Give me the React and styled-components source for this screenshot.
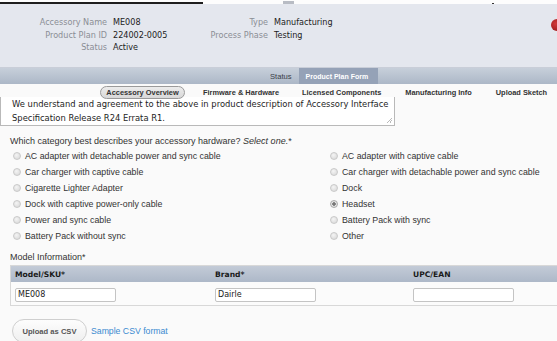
import React from 'react';
import styled, { createGlobalStyle, css } from 'styled-components';

const GlobalStyle = createGlobalStyle`
  body {
    margin: 0;
    background: #fafafa;
    overflow: hidden;
  }
`;

const info = {
  left: [
    ['Accessory Name', 'ME008'],
    ['Product Plan ID', '224002-0005'],
    ['Status', 'Active'],
  ],
  right: [
    ['Type', 'Manufacturing'],
    ['Process Phase', 'Testing'],
  ],
};

// space before each sub tab
const subTabs = [
  { label: 'Accessory Overview', gap: 0 },
  { label: 'Firmware & Hardware', gap: 18 },
  { label: 'Licensed Components', gap: 23 },
  { label: 'Manufacturing Info', gap: 24 },
  { label: 'Upload Sketch', gap: 24 },
];

const leftOptions = [
  'AC adapter with detachable power and sync cable',
  'Car charger with captive cable',
  'Cigarette Lighter Adapter',
  'Dock with captive power-only cable',
  'Power and sync cable',
  'Battery Pack without sync',
];

const rightOptions = [
  'AC adapter with captive cable',
  'Car charger with detachable power and sync cable',
  'Dock',
  'Headset',
  'Battery Pack with sync',
  'Other',
];

const columns = [
  { title: 'Model/SKU*', value: 'ME008' },
  { title: 'Brand*', value: 'Dairle' },
  { title: 'UPC/EAN', value: '' },
];

const App = () => {
  return (
    <Page>
      <GlobalStyle />
      <TopStrip>
        <DarkBar />
        <GreyNub />
        <Dots>
          <span />
          <span />
          <span />
          <span />
          <span />
        </Dots>
        <WinButtons>
          <span />
          <i />
          <span />
        </WinButtons>
      </TopStrip>
      <Header>
        <InfoColumn $width={168} $labelWidth={107}>
          {info.left.map(([k, v]) => (
            <InfoRow key={k}>
              <InfoLabel>{k}</InfoLabel>
              <InfoValue>{v}</InfoValue>
            </InfoRow>
          ))}
        </InfoColumn>
        <InfoColumn $width={200} $labelWidth={100}>
          {info.right.map(([k, v]) => (
            <InfoRow key={k}>
              <InfoLabel>{k}</InfoLabel>
              <InfoValue>{v}</InfoValue>
            </InfoRow>
          ))}
        </InfoColumn>
        <RedDot />
      </Header>
      <TabBar>
        <Tab>Status</Tab>
        <Tab $active>Product Plan Form</Tab>
      </TabBar>
      <SubTabRow>
        {subTabs.map((t, i) => (
          <SubTab key={t.label} $active={i === 0} $gap={t.gap}>
            {t.label}
          </SubTab>
        ))}
      </SubTabRow>
      <Agreement>
        We understand and agreement to the above in product description of Accessory Interface
        Specification Release R24 Errata R1.
        <Grip />
      </Agreement>
      <Question>
        Which category best describes your accessory hardware? <em>Select one.</em>*
      </Question>
      <OptionGrid>
        <OptionColumn>
          {leftOptions.map((o) => (
            <Option key={o}>
              <Radio />
              {o}
            </Option>
          ))}
        </OptionColumn>
        <OptionColumn>
          {rightOptions.map((o) => (
            <Option key={o}>
              <Radio $checked={o === 'Headset'} />
              {o}
            </Option>
          ))}
        </OptionColumn>
      </OptionGrid>
      <SectionLabel>Model Information*</SectionLabel>
      <ModelTable>
        <HeadRow>
          {columns.map((c) => (
            <HeadCell key={c.title}>{c.title}</HeadCell>
          ))}
        </HeadRow>
        <BodyRow>
          {columns.map((c) => (
            <BodyCell key={c.title}>
              <Field>{c.value}</Field>
            </BodyCell>
          ))}
        </BodyRow>
      </ModelTable>
      <Footer>
        <PillButton>Upload as CSV</PillButton>
        <TextLink>Sample CSV format</TextLink>
      </Footer>
    </Page>
  );
};

const tahoma = css`
  font-family: 'DejaVu Sans', 'Liberation Sans', sans-serif;
`;

const arial = css`
  font-family: 'Liberation Sans', Arial, sans-serif;
`;

const Page = styled.div`
  width: 557px;
  height: 341px;
  overflow: hidden;
  background: #fafafa;
`;

const TopStrip = styled.div`
  height: 4px;
  display: flex;
  align-items: flex-start;
  background: #fdfdfd;
`;

const DarkBar = styled.div`
  width: 203px;
  height: 2px;
  margin-top: 2px;
  background: #1e1e1e;
`;

const GreyNub = styled.div`
  width: 11px;
  height: 3px;
  margin: 1px 0 0 80px;
  background: #b8bcc4;
`;

const Dots = styled.div`
  display: flex;
  gap: 28px;
  margin: 4px 0 0 44px;
  span {
    width: 1px;
    height: 1px;
    background: #aaa;
  }
`;

const WinButtons = styled.div`
  display: flex;
  gap: 3px;
  margin: 4px 0 0 24px;
  span {
    width: 10px;
    height: 1px;
    background: #555;
  }
  i {
    width: 2px;
    height: 2px;
    margin-top: -1px;
    background: #333;
  }
`;

const Header = styled.div`
  position: relative;
  height: 63px;
  box-sizing: border-box;
  background: #e4e7ee;
  display: flex;
  padding-top: 12px;
`;

const InfoColumn = styled.div`
  width: ${(p) => p.$width}px;
  display: flex;
  flex-direction: column;
  span:first-child {
    width: ${(p) => p.$labelWidth}px;
  }
`;

const InfoRow = styled.div`
  display: flex;
  gap: 6px;
  height: 12.5px;
  align-items: center;
  ${tahoma};
  font-size: 8.1px;
`;

const InfoLabel = styled.span`
  flex-shrink: 0;
  text-align: right;
  color: #8b8e95;
`;

const InfoValue = styled.span`
  color: #1c1c1c;
`;

const RedDot = styled.div`
  position: absolute;
  right: -6px;
  top: 15px;
  width: 12px;
  height: 12px;
  border-radius: 50%;
  background: radial-gradient(circle at 40% 40%, #d23a3a, #8e1010);
`;

const TabBar = styled.div`
  height: 16px;
  display: flex;
  padding-left: 264px;
  background: linear-gradient(#c7cfda, #acb7c7);
  border-top: 1px solid #c9ced8;
`;

const Tab = styled.div`
  ${arial};
  font-size: 7.6px;
  display: flex;
  align-items: center;
  padding: 0 6px;
  color: #3a3f47;
  ${(p) =>
    p.$active &&
    css`
      background: #95a2b7;
      color: #fff;
      font-weight: bold;
      font-size: 7px;
      margin-left: 1px;
      padding: 0 7px;
      width: 79px;
      box-sizing: border-box;
    `}
`;

const SubTabRow = styled.div`
  position: relative;
  z-index: 1;
  display: flex;
  align-items: flex-start;
  height: 12px;
  padding: 2px 0 0 100px;
`;

const SubTab = styled.div`
  ${arial};
  font-size: 7.4px;
  font-weight: bold;
  color: #333;
  white-space: nowrap;
  height: 13px;
  margin-left: ${(p) => p.$gap}px;
  display: flex;
  align-items: center;
  box-sizing: border-box;
  border-radius: 7px;
  ${(p) =>
    p.$active &&
    css`
      width: 85px;
      justify-content: center;
      background: linear-gradient(#ececec, #d8d8d8);
      border: 1px solid #9a9a9a;
    `}
`;

const Agreement = styled.div`
  position: relative;
  ${tahoma};
  font-size: 8.4px;
  line-height: 14px;
  color: #1d1d1d;
  width: 395px;
  height: 29px;
  box-sizing: border-box;
  padding: 0 0 0 11px;
  margin-top: -1px;
  background: #fff;
  border: 1px solid #b9b9b9;
  border-top: none;
`;

const Grip = styled.div`
  position: absolute;
  right: 2px;
  bottom: 2px;
  width: 5px;
  height: 5px;
  background: linear-gradient(
    135deg,
    transparent 45%,
    #bbb 45%,
    #bbb 55%,
    transparent 55%,
    transparent 70%,
    #bbb 70%,
    #bbb 80%,
    transparent 80%
  );
`;

const Question = styled.div`
  ${arial};
  font-size: 9px;
  color: #333;
  margin: 9px 0 0 10px;
  line-height: 12px;
`;

const OptionGrid = styled.div`
  display: grid;
  grid-template-columns: 317px 1fr;
  padding-left: 10px;
  margin-top: 1px;
`;

const OptionColumn = styled.div`
  display: flex;
  flex-direction: column;
`;

const Option = styled.label`
  ${arial};
  font-size: 8.8px;
  color: #333;
  height: 16px;
  display: flex;
  align-items: center;
  gap: 4px;
`;

const Radio = styled.span`
  width: 8px;
  height: 8px;
  margin-left: 3px;
  border-radius: 50%;
  box-sizing: border-box;
  border: 1px solid #c9c9c9;
  background: radial-gradient(circle at 40% 35%, #f4f4f4, #d6d6d6);
  ${(p) =>
    p.$checked &&
    css`
      background: radial-gradient(circle, #777 0 1.5px, #eaeaea 2px, #d0d0d0);
      border-color: #aaa;
    `}
`;

const SectionLabel = styled.div`
  ${arial};
  font-size: 9px;
  color: #333;
  margin: 7px 0 0 10px;
  line-height: 12px;
`;

const ModelTable = styled.div`
  margin: 2px 0 0 10px;
  border: 1px solid #d8d8d8;
  border-right: none;
  background: #fbfbfb;
`;

const row = css`
  display: grid;
  grid-template-columns: 200px 198px 1fr;
`;

const HeadRow = styled.div`
  ${row};
  height: 16px;
  background: linear-gradient(#c3cbd7, #adb8c8);
`;

const HeadCell = styled.div`
  ${tahoma};
  font-size: 7.6px;
  font-weight: bold;
  color: #1a1a1a;
  display: flex;
  align-items: center;
  padding-left: 4px;
`;

const BodyRow = styled.div`
  ${row};
  height: 23px;
  align-items: center;
`;

const BodyCell = styled.div`
  padding-left: 4px;
  padding-top: 2px;
`;

const Field = styled.div`
  ${tahoma};
  font-size: 8px;
  color: #222;
  width: 101px;
  height: 14px;
  box-sizing: border-box;
  border: 1px solid #c4c4c4;
  border-radius: 2px;
  background: #fff;
  padding-left: 2px;
  line-height: 12px;
`;

const Footer = styled.div`
  display: flex;
  align-items: center;
  gap: 4px;
  margin: 13px 0 0 12px;
`;

const PillButton = styled.button`
  ${arial};
  font-size: 7.6px;
  font-weight: bold;
  color: #555;
  width: 75px;
  height: 24px;
  border-radius: 12px;
  border: 1px solid #cfcfcf;
  background: linear-gradient(#fdfdfd, #efefef);
  padding: 0;
`;

const TextLink = styled.a`
  ${arial};
  font-size: 8.7px;
  color: #3b8ad0;
`;

export default App;
